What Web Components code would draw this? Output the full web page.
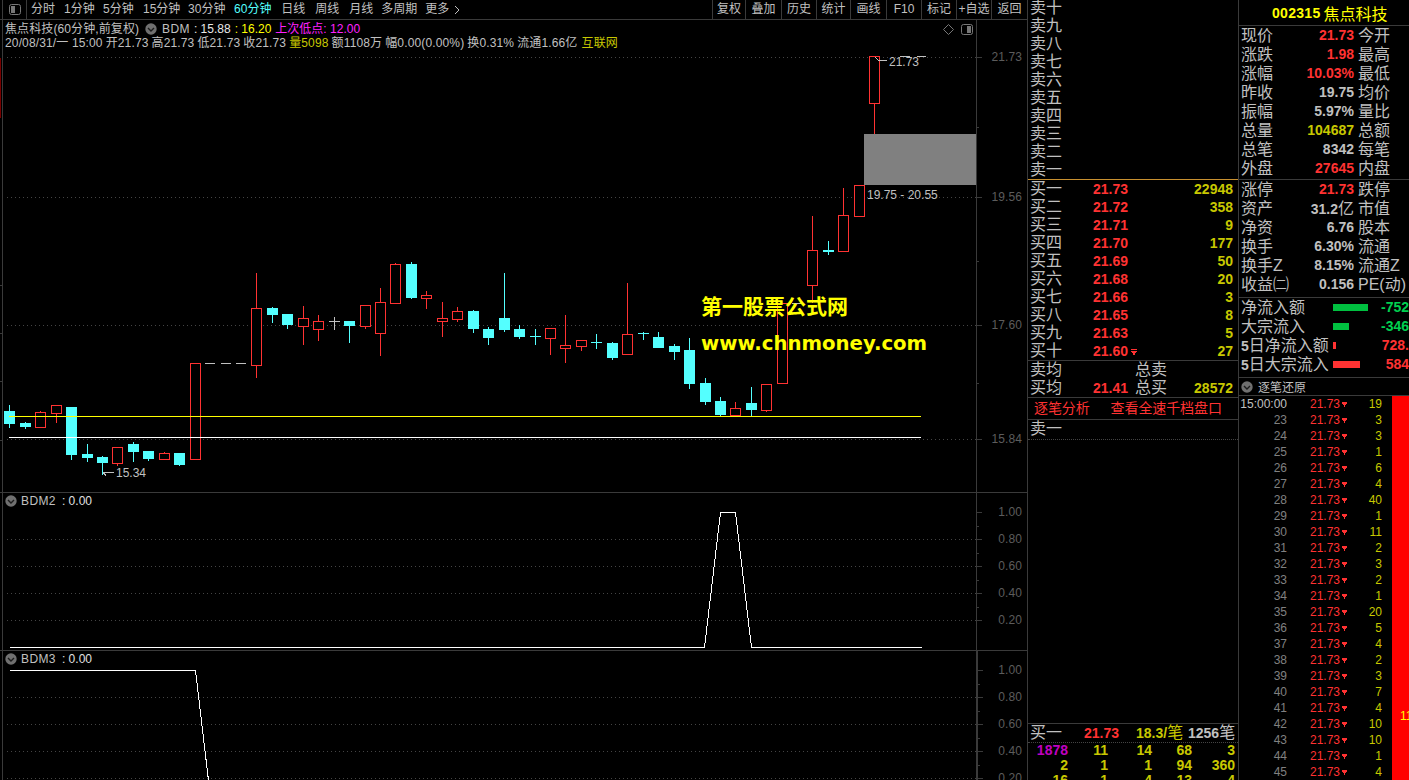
<!DOCTYPE html>
<html lang="zh">
<head>
<meta charset="utf-8">
<title>焦点科技</title>
<style>
  html, body { margin: 0; padding: 0; background: #000; overflow: hidden; }
</style>
</head>
<body>
<tdx-app>
  <kline-area>
    <kline-toolbar></kline-toolbar>
    <chart-pane pane-height="473">
      <candle-chart></candle-chart>
      <value-axis slot="axis" top="20" major="57:21.73,197:19.56,325:17.60,439:15.84" minor="127,261,383"></value-axis>
    </chart-pane>
    <chart-pane pane-height="158">
      <line-chart legend="BDM2" top="493" height="157" grid="539,566,593,620" points="9,647 704,647 720,512 735,512 751,647 921,647"></line-chart>
      <value-axis slot="axis" top="493" major="512:1.00,539:0.80,566:0.60,593:0.40,620:0.20" minor="526,553,580,607"></value-axis>
    </chart-pane>
    <chart-pane pane-height="129" last>
      <line-chart legend="BDM3" top="651" height="129" grid="697,724,751,778" points="9,670 195,670 208,780"></line-chart>
      <value-axis slot="axis" top="651" active major="670:1.00,697:0.80,724:0.60,751:0.40,778:0.20" minor="684,711,738,765"></value-axis>
    </chart-pane>
  </kline-area>
  <order-book></order-book>
  <quote-panel></quote-panel>
</tdx-app>

<script>
const SANS = '"Liberation Sans", "Noto Sans CJK SC", sans-serif';
const LINE = '#3a3a3a';
const GRAY = '#c0c0c0';
const RED = '#ff3232';
const DIM_YELLOW = '#c8c800';

class TdxApp extends HTMLElement {
  constructor() {
    super();
    this.attachShadow({ mode: 'open' });
  }

  connectedCallback() {
    this.shadowRoot.innerHTML = `
      <style>
        :host {
          display: grid;
          grid-template-columns: 1028px 211px 170px;
          width: 1409px;
          height: 780px;
          overflow: hidden;
          background: #000;
          color: ${GRAY};
          font-family: ${SANS};
        }
      </style>
      <slot></slot>
    `;
  }
}

class KlineArea extends HTMLElement {
  constructor() {
    super();
    this.attachShadow({ mode: 'open' });
  }

  connectedCallback() {
    this.shadowRoot.innerHTML = `
      <style>
        :host {
          display: flex;
          flex-direction: column;
          height: 780px;
          overflow: hidden;
          border-right: 1px solid ${LINE};
        }
      </style>
      <slot></slot>
    `;
  }
}

class KlineToolbar extends HTMLElement {
  constructor() {
    super();
    this.attachShadow({ mode: 'open' });
  }

  connectedCallback() {
    // label, gap before it
    const periods = [['分时', 4], ['1分钟', 9], ['5分钟', 8.3], ['15分钟', 9.3], ['30分钟', 7.7], ['60分钟', 8.7], ['日线', 9.7], ['周线', 10], ['月线', 10], ['多周期', 8]];
    const tools = [['复权', 33], ['叠加', 36], ['历史', 35], ['统计', 34], ['画线', 36], ['F10', 35], ['标记', 35], ['+自选', 35], ['返回', 36]];
    this.shadowRoot.innerHTML = `
      <style>
        :host {
          display: flex;
          flex: none;
          height: 19px;
          border-bottom: 1px solid ${LINE};
          font-size: 12px;
          line-height: 19px;
          color: ${GRAY};
        }

        .toggle {
          display: flex;
          align-items: center;
          justify-content: center;
          margin-left: 2px;
          width: 23px;
          border-left: 1px solid ${LINE};
          border-right: 1px solid ${LINE};
        }

        .periods {
          display: flex;
        }

        .active {
          color: #54ffff;
        }

        .more {
          display: flex;
          align-items: center;
          gap: 5px;
          margin-left: 8px;
        }

        .tools {
          display: flex;
          margin-left: auto;
        }

        .tools span {
          border-left: 1px solid ${LINE};
          text-align: center;
          box-sizing: border-box;
        }
      </style>
      <div class="toggle">
        <svg width="12" height="11" viewBox="0 0 12 11">
          <rect x="0.5" y="0.5" width="11" height="10" rx="2" fill="none" stroke="#777"/>
          <rect x="2" y="2" width="4" height="7" fill="#777"/>
        </svg>
      </div>
      <div class="periods">
        ${periods.map(p => `<span class="${p[0] === '60分钟' ? 'active' : ''}" style="margin-left:${p[1]}px">${p[0]}</span>`).join('')}
        <span class="more">更多<svg width="6" height="10" viewBox="0 0 6 10"><path d="M1 1l4 4-4 4" fill="none" stroke="${GRAY}"/></svg></span>
      </div>
      <div class="tools">
        ${tools.map(t => `<span style="width:${t[1]}px">${t[0]}</span>`).join('')}
      </div>
    `;
  }
}

class ChartPane extends HTMLElement {
  constructor() {
    super();
    this.attachShadow({ mode: 'open' });
  }

  connectedCallback() {
    const last = this.hasAttribute('last');
    this.shadowRoot.innerHTML = `
      <style>
        :host {
          display: flex;
          flex: none;
          box-sizing: border-box;
          height: ${this.getAttribute('pane-height')}px;
          ${last ? '' : `border-bottom: 1px solid ${LINE};`}
        }

        .plot {
          position: relative;
          flex: 1;
          min-width: 0;
          overflow: hidden;
        }
      </style>
      <div class="plot"><slot></slot></div>
      <slot name="axis"></slot>
    `;
  }
}

class CollapseIcon extends HTMLElement {
  constructor() {
    super();
    this.attachShadow({ mode: 'open' });
  }

  connectedCallback() {
    this.shadowRoot.innerHTML = `
      <style>
        :host { display: inline-flex; flex: none; width: 12px; height: 12px; }
      </style>
      <svg width="12" height="12" viewBox="0 0 12 12">
        <circle cx="6" cy="6" r="5.7" fill="#707070"/>
        <path d="M3 5l3 3 3-3" fill="none" stroke="#1c1c1c" stroke-width="1.4"/>
      </svg>
    `;
  }
}

class ValueAxis extends HTMLElement {
  constructor() {
    super();
    this.attachShadow({ mode: 'open' });
  }

  connectedCallback() {
    const top = Number(this.getAttribute('top'));
    const major = this.getAttribute('major').split(',').map(s => s.split(':'));
    const minor = this.getAttribute('minor').split(',');
    const active = this.hasAttribute('active');
    this.shadowRoot.innerHTML = `
      <style>
        :host {
          display: block;
          position: relative;
          flex: none;
          box-sizing: border-box;
          width: 51px;
          border-left: ${active ? 2 : 1}px solid ${LINE};
          font-size: 12px;
          color: #5c5c5c;
        }

        i {
          position: absolute;
          left: 0;
          height: 1px;
          background: ${LINE};
        }

        span {
          position: absolute;
          right: 5px;
          line-height: 14px;
          letter-spacing: 0.1px;
        }
      </style>
      ${major.map(m => `<i style="top:${m[0] - top}px;width:5px"></i><span style="top:${m[0] - top - 7}px">${m[1]}</span>`).join('')}
      ${minor.map(y => `<i style="top:${y - top}px;width:2px"></i>`).join('')}
    `;
  }
}

class CandleChart extends HTMLElement {
  constructor() {
    super();
    this.attachShadow({ mode: 'open' });
  }

  candles() {
    // index, kind, high, body top, body bottom, low (pixels read off the reference)
    const data = [
      [0,'c',405,411,423,427],[1,'c',422,423,426,428],[2,'r',411,412,427,427],[3,'r',405,405,413,422],
      [4,'c',407,407,454,459],[5,'c',444,454,457,461],[6,'c',456,457,462,474],[7,'r',447,447,463,465],
      [8,'c',442,444,451,461],[9,'c',451,451,458,460],[10,'r',452,453,459,459],[11,'c',453,453,464,465],
      [12,'r',363,363,459,459],[16,'r',273,308,365,377],[17,'c',307,308,314,322],[18,'c',314,314,324,328],
      [19,'r',306,318,326,344],[20,'r',315,321,329,340],[21,'g',317,321,321,329],[22,'c',321,321,325,342],
      [23,'r',305,305,326,328],[24,'r',288,302,333,355],[25,'r',263,264,303,303],[26,'c',262,264,297,298],
      [27,'r',291,295,298,308],[28,'r',302,318,321,336],[29,'r',307,311,319,321],[30,'c',310,311,328,332],
      [31,'c',327,329,337,344],[32,'c',273,318,329,331],[33,'c',325,329,336,338],[34,'x',329,336,336,344],
      [35,'r',328,328,338,354],[36,'r',315,345,348,362],[37,'r',340,340,346,350],[38,'x',334,342,342,348],
      [39,'c',342,343,357,359],[40,'r',283,334,354,354],[41,'x',332,333,333,339],[42,'c',332,337,347,347],
      [43,'c',344,346,351,359],[44,'c',338,350,383,388],[45,'c',378,383,401,404],[46,'c',397,401,414,416],
      [47,'r',402,408,415,416],[48,'c',387,403,409,415],[49,'r',384,384,410,411],[50,'r',303,303,383,383],
      [52,'r',216,250,285,302],[53,'x',241,250,250,254],[54,'r',188,215,251,251],[55,'r',185,185,216,216],
      [56,'r',56,56,103,133]
    ];
    const fixed = { 25: 395, 52: 812, 54: 843 };
    return data.map(([i, kind, high, top, bottom, low]) => {
      const x = fixed[i] || Math.round(9.28 + 15.45 * i);
      const color = kind === 'r' ? RED : kind === 'g' ? GRAY : '#54ffff';
      const wick = `<rect x="${x}" y="${high}" width="1" height="${low - high + 1}" fill="${color}"/>`;
      if (kind === 'r') {
        return `${wick}<rect x="${x - 4.5}" y="${top + 0.5}" width="10" height="${bottom - top}" fill="#000" stroke="${color}"/>`;
      }
      if (kind === 'c') {
        return `${wick}<rect x="${x - 5}" y="${top}" width="11" height="${bottom - top + 1}" fill="${color}"/>`;
      }
      const thick = i === 53 ? 2 : 1;
      return `${wick}<rect x="${x - 5}" y="${top}" width="11" height="${thick}" fill="${color}"/>`;
    }).join('');
  }

  connectedCallback() {
    const grid = [57, 197, 325, 439];
    const leftTicks = [285, 333, 381, 440];
    this.shadowRoot.innerHTML = `
      <style>
        :host {
          display: block;
          height: 100%;
          font-size: 12px;
          color: ${GRAY};
        }

        svg.canvas {
          position: absolute;
          left: 0;
          top: 0;
        }

        .head {
          position: relative;
          padding: 2px 0 0 5px;
          line-height: 14px;
          white-space: nowrap;
        }

        .line {
          display: flex;
          align-items: center;
          height: 14px;
        }

        .legend span { margin-right: 4px; }
        .stats { gap: 3px; letter-spacing: .14px; }
        .white { color: #e8e8e8; }
        .yellow { color: #ffff00; }
        .magenta { color: #ff20ff; }
        .dim { color: ${DIM_YELLOW}; }
        .flag { color: ${DIM_YELLOW}; margin-left: 1px; }

        .note {
          position: absolute;
          line-height: 14px;
          white-space: nowrap;
        }

        .mark {
          position: absolute;
          left: 943px;
          top: 4px;
          display: flex;
          gap: 7px;
          align-items: center;
        }

        .wm {
          position: absolute;
          color: #ffff00;
          font-weight: 700;
          white-space: nowrap;
        }
      </style>
      <svg class="canvas" width="976" height="472" viewBox="0 20 976 472" shape-rendering="crispEdges">
        <rect x="0" y="58" width="1" height="60" fill="#7a0000"/>
        <rect x="2" y="20" width="1" height="472" fill="${LINE}"/>
        ${leftTicks.map(y => `<rect x="0" y="${y}" width="2" height="1" fill="${LINE}"/>`).join('')}
        ${grid.map(y => `<line x1="7" x2="976" y1="${y + 0.5}" y2="${y + 0.5}" stroke="#444" stroke-dasharray="1 3"/>`).join('')}
        ${this.candles()}
        <rect x="205" y="363" width="10" height="1" fill="${GRAY}"/>
        <rect x="221" y="363" width="10" height="1" fill="${GRAY}"/>
        <rect x="236" y="363" width="10" height="1" fill="${GRAY}"/>
        <rect x="792" y="303" width="11" height="1" fill="${GRAY}"/>
        <rect x="9" y="416" width="912" height="1" fill="#ffff00"/>
        <rect x="9" y="437" width="912" height="1" fill="#ffffff"/>
        <rect x="864" y="134" width="112" height="51" fill="#808080"/>
        <path d="M114 472.500H103M103 472.500l3 3" fill="none" stroke="${GRAY}"/>
        <path d="M875 57l3 3h9M900 56.500h10M917 56.500h9" fill="none" stroke="${GRAY}"/>
      </svg>
      <div class="head">
        <div class="line legend">
          <span style="margin-right:6px;letter-spacing:.1px">焦点科技(60分钟,前复权)</span>
          <collapse-icon style="margin-right:5px"></collapse-icon>
          <span style="letter-spacing:.4px">BDM</span>
          <span class="white">: 15.88</span>
          <span class="yellow">: 16.20</span>
          <span class="magenta">上次低点: 12.00</span>
        </div>
        <div class="line stats">
          <span>20/08/31/一 15:00</span>
          <span>开21.73</span>
          <span>高21.73</span>
          <span>低21.73</span>
          <span>收21.73</span>
          <span class="dim">量5098</span>
          <span>额1108万</span>
          <span>幅0.00(0.00%)</span>
          <span>换0.31%</span>
          <span>流通1.66亿</span>
          <span class="flag">互联网</span>
        </div>
      </div>
      <div class="mark">
        <svg width="11" height="11" viewBox="0 0 11 11"><path d="M5.500 0.500l5 5-5 5-5-5z" fill="none" stroke="#777"/></svg>
        <svg width="12" height="11" viewBox="0 0 12 11">
          <rect x="0.500" y="0.500" width="11" height="10" rx="2" fill="none" stroke="#777"/>
          <rect x="6" y="2" width="4" height="7" fill="#777"/>
        </svg>
      </div>
      <span class="note" style="left:889px;top:35px">21.73</span>
      <span class="note" style="left:867px;top:168px">19.75 - 20.55</span>
      <span class="note" style="left:116px;top:446px">15.34</span>
      <span class="wm" style="left:701px;top:274px;font-size:21px;line-height:26px">第一股票公式网</span>
      <span class="wm" style="left:701px;top:312px;font-family:'DejaVu Sans',sans-serif;font-size:19.700px;line-height:24px">www.chnmoney.com</span>
    `;
  }
}

class LineChart extends HTMLElement {
  constructor() {
    super();
    this.attachShadow({ mode: 'open' });
  }

  connectedCallback() {
    const top = this.getAttribute('top');
    const height = this.getAttribute('height');
    const grid = this.getAttribute('grid').split(',');
    const points = this.getAttribute('points').split(' ').map(p => {
      const [x, y] = p.split(',').map(Number);
      return `${x + 0.5},${y + 0.5}`;
    }).join(' ');
    this.shadowRoot.innerHTML = `
      <style>
        :host {
          display: block;
          height: 100%;
          font-size: 12px;
          color: ${GRAY};
        }

        svg {
          position: absolute;
          left: 0;
          top: 0;
        }

        .legend {
          position: relative;
          display: flex;
          align-items: center;
          gap: 4px;
          height: 14px;
          padding: 1px 0 0 5px;
          white-space: nowrap;
        }

        .name { letter-spacing: .4px; }
        .value { margin-left: 2px; color: #e0e0e0; }
      </style>
      <svg width="976" height="${height}" viewBox="0 ${top} 976 ${height}" shape-rendering="crispEdges">
        <rect x="2" y="${top}" width="1" height="${height}" fill="${LINE}"/>
        ${grid.map(y => `<line x1="7" x2="976" y1="${Number(y) + 0.5}" y2="${Number(y) + 0.5}" stroke="#444" stroke-dasharray="1 3"/>`).join('')}
        <polyline points="${points}" fill="none" stroke="#fff"/>
      </svg>
      <div class="legend">
        <collapse-icon></collapse-icon>
        <span class="name">${this.getAttribute('legend')}</span>
        <span class="value">: 0.00</span>
      </div>
    `;
  }
}

class OrderBook extends HTMLElement {
  constructor() {
    super();
    this.attachShadow({ mode: 'open' });
  }

  connectedCallback() {
    const nums = ['十', '九', '八', '七', '六', '五', '四', '三', '二', '一'];
    const buys = [
      ['一', '21.73', '22948'], ['二', '21.72', '358'], ['三', '21.71', '9'], ['四', '21.70', '177'],
      ['五', '21.69', '50'], ['六', '21.68', '20'], ['七', '21.66', '3'], ['八', '21.65', '8'],
      ['九', '21.63', '5'], ['十', '21.60', '27']
    ];
    const tape = [
      ['1878', '11', '14', '68', '3'],
      ['2', '1', '1', '94', '360'],
      ['16', '1', '4', '13', '4']
    ];
    this.shadowRoot.innerHTML = `
      <style>
        :host {
          display: flex;
          flex-direction: column;
          height: 780px;
          overflow: hidden;
          border-right: 1px solid ${LINE};
          font-size: 16px;
          color: ${GRAY};
        }

        .row {
          display: grid;
          grid-template-columns: 63px 60px 1fr;
          flex: none;
          height: 18px;
          line-height: 18px;
          padding: 0 5px 0 2px;
          white-space: nowrap;
        }

        .sells { margin-top: -1px; border-bottom: 1px solid #c89030; }
        .num { font-size: 14px; font-weight: 700; }
        .price { color: ${RED}; }
        .vol { color: ${DIM_YELLOW}; text-align: right; }
        .price svg { margin-left: 3px; vertical-align: 1px; }

        .sep { flex: none; height: 1px; background: ${LINE}; }
        .dots { flex: none; height: 1px; border-top: 1px dotted #444; box-sizing: border-box; }

        .links {
          display: flex;
          flex: none;
          gap: 21px;
          height: 21px;
          padding-left: 6px;
          font-size: 14px;
          line-height: 21px;
          letter-spacing: -.1px;
          color: ${RED};
        }

        .spacer { flex: none; height: 283px; }

        .trade { grid-template-columns: 54px 52px 52px 47px; padding-right: 0; }
        .trade .y { color: ${DIM_YELLOW}; }
        .tape {
          display: grid;
          grid-template-columns: 40px 40px 44px 40px 43px;
          flex: none;
          height: 15px;
          line-height: 15px;
          font-size: 14px;
          font-weight: 700;
          color: ${DIM_YELLOW};
          text-align: right;
        }

        .tape .m { color: #c000c0; }
      </style>
      <div class="sells">
        ${nums.map(n => `<div class="row"><span>卖${n}</span></div>`).join('')}
      </div>
      ${buys.map(b => `
        <div class="row">
          <span>买${b[0]}</span>
          <span class="price num">${b[1]}${b[1] === '21.60' ? '<svg width="6" height="6" viewBox="0 0 6 6" shape-rendering="crispEdges"><path d="M0 0h6v1h-6zM0 2h6v1h-1v1h-1v2h-2v-2h-1v-1h-1z" fill="' + RED + '"/></svg>' : ''}</span>
          <span class="vol num">${b[2]}</span>
        </div>`).join('')}
      <div class="sep"></div>
      <div class="row" style="grid-template-columns:105px 1fr"><span>卖均</span><span>总卖</span></div>
      <div class="row" style="grid-template-columns:63px 42px 50px 1fr"><span>买均</span><span class="price num">21.41</span><span>总买</span><span class="vol num">28572</span></div>
      <div class="sep"></div>
      <div class="links"><span>逐笔分析</span><span>查看全速千档盘口</span></div>
      <div class="sep"></div>
      <div class="row" style="height:19px"><span>卖一</span></div>
      <div class="dots"></div>
      <div class="spacer"></div>
      <div class="sep"></div>
      <div class="row trade">
        <span>买一</span>
        <span class="price num">21.73</span>
        <span class="y"><span class="num">18.3/</span>笔</span>
        <span><span class="num">1256</span>笔</span>
      </div>
      <div class="dots"></div>
      ${tape.map((t, n) => `<div class="tape">${t.map((v, i) => `<span class="${n === 0 && i === 0 ? 'm' : ''}">${v}</span>`).join('')}</div>`).join('')}
    `;
  }
}

class QuotePanel extends HTMLElement {
  constructor() {
    super();
    this.attachShadow({ mode: 'open' });
  }

  connectedCallback() {
    const quotes = [
      ['现价', '21.73', 'r', '今开'], ['涨跌', '1.98', 'r', '最高'], ['涨幅', '10.03%', 'r', '最低'],
      ['昨收', '19.75', 'g', '均价'], ['振幅', '5.97%', 'g', '量比'], ['总量', '104687', 'y', '总额'],
      ['总笔', '8342', 'g', '每笔'], ['外盘', '27645', 'r', '内盘']
    ];
    const funds = [
      ['涨停', '21.73', 'r', '跌停'], ['资产', '31.2<b>亿</b>', 'g', '市值'], ['净资', '6.76', 'g', '股本'],
      ['换手', '6.30%', 'g', '流通'], ['换手Z', '8.15%', 'g', '流通Z'], ['收益㈡', '0.156', 'g', 'PE(动)']
    ];
    const flows = [
      ['净流入额', 35, 'g', '-752'], ['大宗流入', 16, 'g', '-346'],
      ['<em>5</em>日净流入额', 3, 'r', '728.'], ['<em>5</em>日大宗流入', 27, 'r', '584']
    ];
    const row = q => `<div class="row"><span>${q[0]}</span><span class="num ${q[2]}">${q[1]}</span><span>${q[3]}</span></div>`;
    const times = ['15:00:00'];
    for (let m = 23; m <= 45; m++) times.push(String(m));
    const vols = [19, 3, 3, 1, 6, 4, 40, 1, 11, 2, 3, 2, 1, 20, 5, 4, 2, 3, 7, 4, 10, 10, 1, 4];
    const down = `<svg width="5" height="5" viewBox="0 0 5 5" shape-rendering="crispEdges"><path d="M0 0h5v2h-1v1h-1v2h-1v-2h-1v-1h-1z" fill="${RED}"/></svg>`;
    this.shadowRoot.innerHTML = `
      <style>
        :host {
          display: flex;
          flex-direction: column;
          height: 780px;
          overflow: hidden;
          font-size: 16px;
          color: ${GRAY};
        }

        .title {
          display: flex;
          flex: none;
          gap: 3px;
          align-items: center;
          height: 25px;
          padding-left: 33px;
          border-bottom: 1px solid ${LINE};
          color: #ffff00;
        }

        .title .code { font-size: 14px; font-weight: 700; letter-spacing: .3px; }

        .block {
          flex: none;
          padding-bottom: 1px;
          border-bottom: 1px solid ${LINE};
        }

        .block.pad { padding-bottom: 3px; }

        .row {
          display: grid;
          grid-template-columns: 48px 65px 55px;
          column-gap: 0;
          height: 19px;
          line-height: 19px;
          padding-left: 2px;
          white-space: nowrap;
        }

        .row span:last-child { padding-left: 4px; }

        .num { font-size: 14px; font-weight: 700; text-align: right; }
        .num b { font-size: 16px; font-weight: 400; }
        .r { color: ${RED}; }
        .g { color: ${GRAY}; }
        .y { color: ${DIM_YELLOW}; }

        .flow {
          display: grid;
          grid-template-columns: 92px 1fr auto;
          height: 19px;
          line-height: 19px;
          padding-left: 2px;
          white-space: nowrap;
          overflow: hidden;
        }

        .flow em { font-style: normal; font-size: 14px; font-weight: 700; }
        .flow i { display: block; height: 7px; margin-top: 6px; }
        .flow i.g { background: #00c040; }
        .flow i.r { background: ${RED}; }
        .flow .gv { color: #00d050; }

        .head {
          display: flex;
          flex: none;
          align-items: center;
          gap: 5px;
          height: 17px;
          padding-left: 2px;
          font-size: 12px;
          border-bottom: 1px solid ${LINE};
        }

        .ticks { display: flex; flex: 1; min-height: 0; }
        .list { width: 153px; flex: none; font-size: 12px; }

        .tick {
          display: grid;
          grid-template-columns: 48px 23px 30px 12px 30px;
          align-items: center;
          height: 16px;
          line-height: 16px;
          white-space: nowrap;
        }

        .tick .t { text-align: right; color: #808080; }
        .tick .t.first { color: ${GRAY}; }
        .tick .p { grid-column: 3; color: ${RED}; }
        .tick svg { margin-left: 2px; display: block; }
        .tick .v { color: ${DIM_YELLOW}; text-align: right; }

        .bar {
          flex: 1;
          overflow: hidden;
          padding: 312px 0 0 8px;
          background: #ff0000;
          color: #ffff00;
          font-size: 12px;
          line-height: 16px;
        }
      </style>
      <div class="title"><span class="code">002315</span><span>焦点科技</span></div>
      <div class="block">${quotes.map(row).join('')}</div>
      <div class="block pad">${funds.map(row).join('')}</div>
      <div class="block pad">
        ${flows.map(f => `<div class="flow"><span>${f[0]}</span><span><i class="${f[2]}" style="width:${f[1]}px"></i></span><span class="num ${f[2] === 'g' ? 'gv' : 'r'}">${f[3]}</span></div>`).join('')}
      </div>
      <div class="head"><collapse-icon></collapse-icon><span>逐笔还原</span></div>
      <div class="ticks">
        <div class="list">
          ${times.map((t, i) => `<div class="tick"><span class="t ${i === 0 ? 'first' : ''}">${t}</span><span class="p">21.73</span>${down}<span class="v">${vols[i]}</span></div>`).join('')}
        </div>
        <div class="bar">11</div>
      </div>
    `;
  }
}

customElements.define('collapse-icon', CollapseIcon);
customElements.define('value-axis', ValueAxis);
customElements.define('chart-pane', ChartPane);
customElements.define('candle-chart', CandleChart);
customElements.define('line-chart', LineChart);
customElements.define('kline-toolbar', KlineToolbar);
customElements.define('kline-area', KlineArea);
customElements.define('order-book', OrderBook);
customElements.define('quote-panel', QuotePanel);
customElements.define('tdx-app', TdxApp);
</script>
</body>
</html>
